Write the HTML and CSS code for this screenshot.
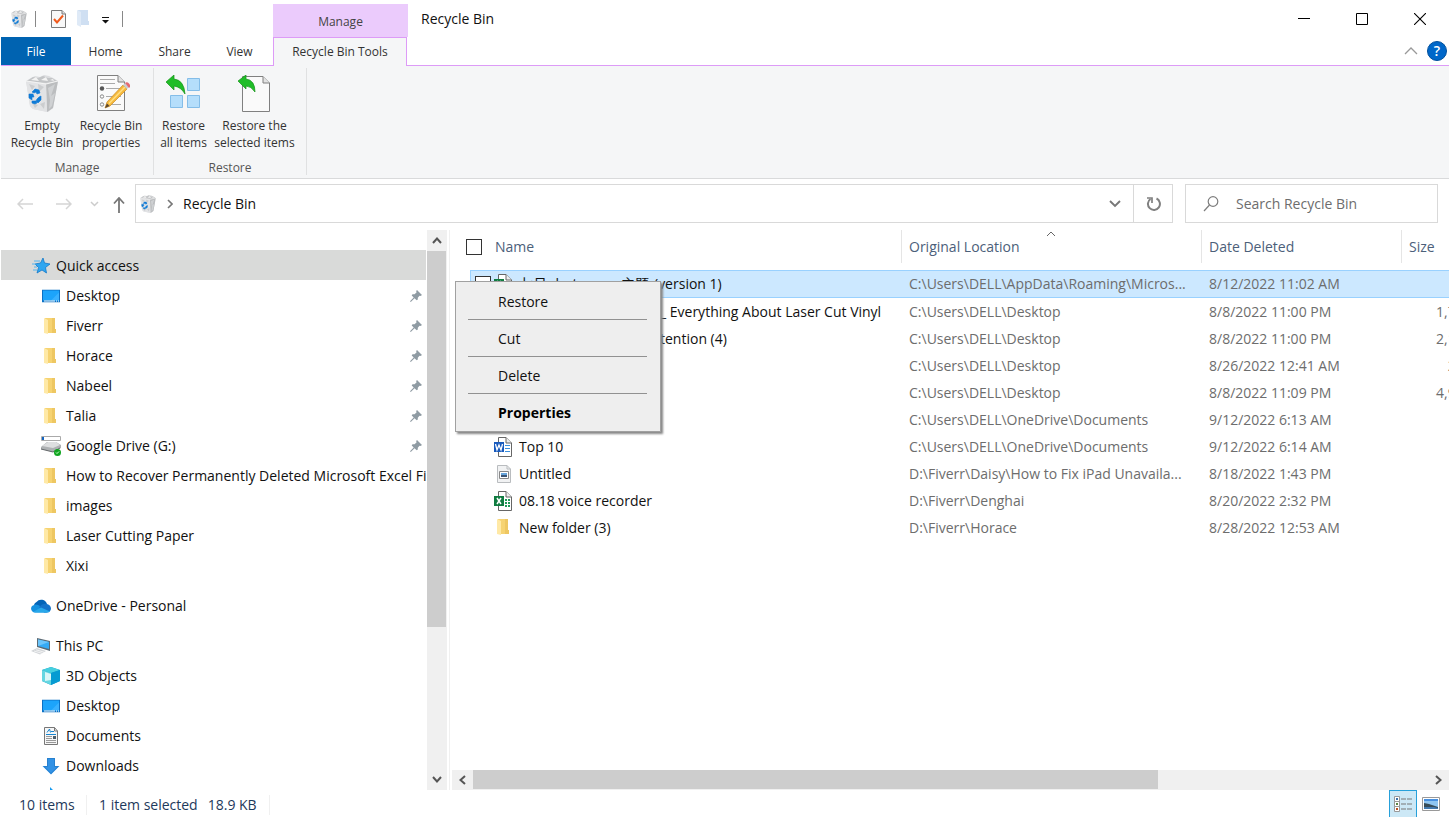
FILE: index.html
```html
<!DOCTYPE html>
<html lang="en">
<head>
<meta charset="utf-8">
<title>Recycle Bin</title>
<link rel="stylesheet" href="styles.css">
</head>
<body>
<svg class="defs" aria-hidden="true">
  <symbol id="bin" viewBox="0 0 32 37">
    <path d="M0 6 5 3 9 1 14 2 18 0 23 1 27 3 32 6 27 33 22 37 7 34 4 31Z" fill="#dcdddf"/>
    <path d="M20 9 32 6 27 33 21 37Z" fill="#bbbdbf"/>
    <path d="M22 13 29 9 25 21 29 18 26 31 23 34 24 25Z" fill="#cfd1d3"/>
    <path d="M0 6 20 9 21 37 7 34 4 31Z" fill="#e2e3e5"/>
    <path d="M3 9 9 11 6 15ZM12 9 18 12 13 17ZM6 28 12 30 9 33ZM14 29 19 27 18 34Z" fill="#cbcdcf"/>
    <path d="M1 6 7 2 12 3 17 1 22 3 26 3 31 6 20 8Z" fill="#c3c5c7"/>
    <path d="M5 5 10 2 13 6ZM15 5 20 2 22 6ZM24 5 27 4 28 6Z" fill="#f3f3f3"/>
    <path d="M0 6 20 9 32 6" fill="none" stroke="#f4f4f4" stroke-width="1"/>
    <path d="m6 17 3-3 4 1 1 3-3 1-1-2-2 1ZM3 19l4 0 1 3-2 0 0 3-3-2ZM6 26l4 0 1 2-2 1-3-1ZM11 24l2-2 2-1 0 4-3 3-2-2Z" fill="#0f7bd6" stroke="#0f7bd6" stroke-width=".6"/>
  </symbol>
  <symbol id="folder" viewBox="0 0 13 17">
    <path d="M1 0H11V11H12V15H2Z" fill="#f6d372"/>
    <path d="M8 0H11V11H12V15H8Z" fill="#eec762"/>
    <path d="M0 0 4 2V16L0 15Z" fill="#ffe9a6"/>
  </symbol>
  <symbol id="pin" viewBox="0 0 12 12">
    <path d="M7 0 12 5 10.500 6 9.500 5.700 7.800 7.700 7.800 9.500 6.700 10.300 4.500 8.300 0.800 12 0 11.300 3.700 7.500 1.700 5.400 2.500 4.300 4.500 4.200 6.500 2.500 6.200 1Z" fill="#8f9ba3"/>
  </symbol>
  <symbol id="desktop" viewBox="0 0 18 13">
    <path d="M0 0H18V13H0Z" fill="#0b70c4"/><path d="M1 1H17V11H1Z" fill="#1ca4fb"/><path d="M9 11 17 3V11Z" fill="#39b1ff"/>
    <path d="M2 11.500h11M14 11.500h1M16 11.500h1" stroke="#fff" stroke-width="1"/>
  </symbol>
  <symbol id="excel" viewBox="0 0 18 20">
    <path d="M4.500.5H12L17.500 6V19.500H4.500Z" fill="#fff" stroke="#666"/><path d="M12 .5V6H17.500" fill="#eee" stroke="#666"/>
    <path d="M11 8h2v2h-2zM14 8h2v2h-2zM11 11h2v2h-2zM14 11h2v2h-2zM11 14h2v2h-2zM14 14h2v2h-2z" fill="#1d9a57"/>
    <path d="M0 5H10V15H0Z" fill="#107c41"/><path d="M3 7 7 13M7 7 3 13" stroke="#fff" stroke-width="1.500"/>
  </symbol>
  <symbol id="word" viewBox="0 0 18 20">
    <path d="M4.500.5H12L17.500 6V19.500H4.500Z" fill="#fff" stroke="#666"/><path d="M12 .5V6H17.500" fill="#eee" stroke="#666"/>
    <path d="M11 8.500h5M11 11.500h5M11 14.500h5" stroke="#3b8fdc" stroke-width="1"/>
    <path d="M0 5H10V15H0Z" fill="#185abd"/><path d="M1.500 7 3 13 5 8 7 13 8.500 7" fill="none" stroke="#fff" stroke-width="1.300"/>
  </symbol>
</svg>

<div class="window">
  <header class="title-row">
    <div class="quick-bar">
      <svg class="ic-bin-s" viewBox="0 0 32 37"><use href="#bin"/></svg>
      <span class="bar"></span>
      <button type="button" class="plain qa-prop" aria-label="Properties"><svg width="15" height="18" viewBox="0 0 15 18"><path d="M.5.500H11L14.500 4V17.500H.5Z" fill="#f8f8f8" stroke="#7b7b7b"/><path d="M11 .5V4H14.500" fill="#ddd" stroke="#7b7b7b"/><path d="M3 9 6 12.500 12 5.500" fill="none" stroke="#f05a1c" stroke-width="2"/></svg></button>
      <button type="button" class="plain qa-new" aria-label="New folder"><svg width="13" height="17" viewBox="0 0 13 17"><path d="M1 0H11V11H12V15H2Z" fill="#cfdff2"/><path d="M0 0 4 2V17L0 15Z" fill="#dfeaf7"/></svg></button>
      <button type="button" class="plain qa-more" aria-label="Customize Quick Access Toolbar"><svg width="7" height="7" viewBox="0 0 7 7"><path d="M0 0H7V1H0ZM0 3H7L3.500 6.500Z" fill="#111"/></svg></button>
      <span class="bar"></span>
    </div>
    <div class="context-tab">Manage</div>
    <h1 class="title">Recycle Bin</h1>
    <div class="caption">
      <button type="button" class="plain" aria-label="Minimize"><svg width="12" height="12"><path d="M0 5.500H12" stroke="#000"/></svg></button>
      <button type="button" class="plain" aria-label="Maximize"><svg width="12" height="12"><path d="M.5.500H11.500V11.500H.5Z" fill="none" stroke="#000"/></svg></button>
      <button type="button" class="plain" aria-label="Close"><svg width="12" height="12"><path d="M0 0 12 12M12 0 0 12" stroke="#000" stroke-width="1.100"/></svg></button>
    </div>
  </header>

  <nav class="tabs">
    <button type="button" class="tab file">File</button>
    <button type="button" class="tab home">Home</button>
    <button type="button" class="tab share">Share</button>
    <button type="button" class="tab view">View</button>
    <button type="button" class="tab active">Recycle Bin Tools</button>
    <div class="tab-end">
      <button type="button" class="plain" aria-label="Minimize the ribbon"><svg width="14" height="8"><path d="M1 7 7 1 13 7" fill="none" stroke="#999" stroke-width="1.300"/></svg></button>
      <button type="button" class="help" aria-label="Help">?</button>
    </div>
  </nav>

  <section class="ribbon">
    <div class="group manage">
      <div class="tools">
        <button type="button" class="tool"><svg width="32" height="37"><use href="#bin"/></svg><span>Empty<br>Recycle Bin</span></button>
        <button type="button" class="tool"><svg width="38" height="37" viewBox="-5 0 38 37">
          <path d="M.5.500H21L27.500 7V35.500H.5Z" fill="#fafafa" stroke="#808080"/><path d="M21 .5V7H27.500" fill="#e2e2e2" stroke="#808080"/>
          <path d="M3 4.500H18M3 8.500H18M9 13.500H24M9 21.500H24M9 29.500H24" stroke="#aaa"/><circle cx="5" cy="13.500" r="2.200" fill="#555"/><circle cx="5" cy="21.500" r="1.700" fill="#fff" stroke="#888"/><circle cx="5" cy="29.500" r="1.700" fill="#fff" stroke="#888"/>
          <path d="M10 27 26 10 30 14 13 31 8 33Z" fill="#f6b93c" stroke="#c98a22" stroke-width=".7"/><path d="M12 28.500 28 12" stroke="#ffdf83" stroke-width="1.500"/><path d="M26 10 28 8 32 12 30 14Z" fill="#c9cdd0"/><path d="M28 8q2-1.500 4 .5t1 3.500l-1 1Z" fill="#e46a72"/><path d="M8 33 10 28.500 12.500 31Z" fill="#5a4632"/>
        </svg><span>Recycle Bin<br>properties</span></button>
      </div>
      <div class="group-name">Manage</div>
    </div>
    <div class="group restore">
      <div class="tools">
        <button type="button" class="tool"><svg width="36" height="37" viewBox="1 1 36 37">
          <g fill="#b5defb" stroke="#84bde8"><path d="M22.500 4.500h12v12h-12zM5.500 21.500h12v12h-12zM22.500 21.500h12v12h-12z"/></g>
          <path d="M1 8 9 1V5Q19 6 20 20 16 13 9 12V16Z" fill="#20bd28" stroke="#159119" stroke-width=".7"/></svg><span>Restore<br>all items</span></button>
        <button type="button" class="tool"><svg width="36" height="37" viewBox="1 1 36 37">
          <path d="M6.500 2.500H27L33.500 9V37.500H6.500Z" fill="#fafafa" stroke="#808080"/><path d="M27 2.500V9H33.500" fill="#e2e2e2" stroke="#808080"/>
          <path d="M2 7 10 1V5Q19 6 19 18 15 12 10 12V15Z" fill="#20bd28" stroke="#159119" stroke-width=".7"/></svg><span>Restore the<br>selected items</span></button>
      </div>
      <div class="group-name">Restore</div>
    </div>
  </section>

  <div class="address-row">
    <div class="nav">
      <button type="button" class="plain" aria-label="Back"><svg width="16" height="12"><path d="M16 6H1M6 1 1 6 6 11" fill="none" stroke="#d5d5d5" stroke-width="1.500"/></svg></button>
      <button type="button" class="plain forward" aria-label="Forward"><svg width="16" height="12"><path d="M0 6H15M10 1 15 6 10 11" fill="none" stroke="#d5d5d5" stroke-width="1.500"/></svg></button>
      <button type="button" class="plain recent" aria-label="Recent locations"><svg width="9" height="6"><path d="M1 1 4.500 4.500 8 1" fill="none" stroke="#ccc" stroke-width="1.500"/></svg></button>
      <button type="button" class="plain up" aria-label="Up"><svg width="12" height="16"><path d="M6 16V1M1 6.500 6 1 11 6.500" fill="none" stroke="#777" stroke-width="1.800"/></svg></button>
    </div>
    <div class="address">
      <svg class="ic-bin-s" viewBox="0 0 32 37"><use href="#bin"/></svg>
      <svg class="crumb" width="6" height="10"><path d="M1 1 5 5 1 9" fill="none" stroke="#777" stroke-width="1.600"/></svg>
      <span class="path">Recycle Bin</span>
      <button type="button" class="plain" aria-label="Previous locations"><svg width="12" height="8"><path d="M1 1 6 6 11 1" fill="none" stroke="#777" stroke-width="1.900"/></svg></button>
      <button type="button" class="plain refresh" aria-label="Refresh"><svg width="16" height="16" viewBox="0 0 16 16"><path d="M11.500 2.500A6 6 0 1 1 5.500 3" fill="none" stroke="#808080" stroke-width="2"/><path d="M2 2H7V7" fill="none" stroke="#808080" stroke-width="1.700"/></svg></button>
    </div>
    <label class="search">
      <svg width="16" height="16"><circle cx="10" cy="5.500" r="4.800" fill="none" stroke="#7d7d7d" stroke-width="1.200"/><path d="M6.500 9 1 15" stroke="#7d7d7d" stroke-width="1.200"/></svg>
      <input type="text" placeholder="Search Recycle Bin" aria-label="Search Recycle Bin">
    </label>
  </div>

  <main class="main">
    <aside class="side">
      <ul class="tree">
        <li class="root current"><svg class="ico" viewBox="0 0 18 18"><path d="M11 1 12.500 6 18 7 13.500 10.500 14.500 16 10 13 5 16 6.500 10.500 3 7 8.500 6Z" fill="#2fa6f0" stroke="#1479c9" stroke-width=".8"/><path d="M2 4h6M0 7h4M2 10h3M1 13h4" stroke="#54b4ee"/></svg>Quick access</li>
        <li><svg class="ico" viewBox="0 0 18 13"><use href="#desktop"/></svg><span>Desktop</span><svg class="pin"><use href="#pin"/></svg></li>
        <li><svg class="ico fold"><use href="#folder"/></svg><span>Fiverr</span><svg class="pin"><use href="#pin"/></svg></li>
        <li><svg class="ico fold"><use href="#folder"/></svg><span>Horace</span><svg class="pin"><use href="#pin"/></svg></li>
        <li><svg class="ico fold"><use href="#folder"/></svg><span>Nabeel</span><svg class="pin"><use href="#pin"/></svg></li>
        <li><svg class="ico fold"><use href="#folder"/></svg><span>Talia</span><svg class="pin"><use href="#pin"/></svg></li>
        <li><svg class="ico drive" viewBox="0 0 20 20"><path d="M.5.500H19.500V4.500H.5Z" fill="#fff" stroke="#aaa"/><path d="M1 1H3V4H1Z" fill="#1565c0"/><path d="M0 11 6 6H15L20 9V12L12 16 0 13Z" fill="#aeb1b3"/><path d="M1 10 7 6H15L19 9 12 12Z" fill="#dedfe0"/><path d="M0 13 12 16 19 12" fill="none" stroke="#626668"/><circle cx="16.500" cy="16.500" r="3.500" fill="#10a51f"/><path d="m15 16.500 1 1 2-2" fill="none" stroke="#d5ffd5"/></svg><span>Google Drive (G:)</span><svg class="pin"><use href="#pin"/></svg></li>
        <li><svg class="ico fold"><use href="#folder"/></svg><span class="long">How to Recover Permanently Deleted Microsoft Excel Files</span></li>
        <li><svg class="ico fold"><use href="#folder"/></svg><span>images</span></li>
        <li><svg class="ico fold"><use href="#folder"/></svg><span>Laser Cutting Paper</span></li>
        <li><svg class="ico fold"><use href="#folder"/></svg><span>Xixi</span></li>
        <li class="root gap"><svg class="ico drive" viewBox="0 0 20 14"><path d="M3 6A4 4 0 0 1 5.500 3 6 6 0 0 1 16 5L12 9Z" fill="#0364b8"/><path d="M4 13.500A4 4 0 0 1 1 7Q5 4 9 7L16 13.500Z" fill="#1490df"/><path d="M8 8Q12 3.500 16 5 20 6 20 10 19 13.500 16 13.500H13Z" fill="#1373ca"/><path d="M2 13 10 8.500 19 12.500Q18 13.500 16 13.500H4Z" fill="#28a8ea"/></svg>OneDrive - Personal</li>
        <li class="root gap"><svg class="ico drive" viewBox="0 0 20 18"><path d="M6 1 19 4V14L6 10Z" fill="#5d6b75"/><path d="M7 2.500 18 5V12L7 9Z" fill="#35aaf5"/><path d="M7 2.500 18 5 7 9Z" fill="#6cc5fb"/><path d="M0 14 6 11 15 14 9 17.500Z" fill="#d2d5d8"/><path d="m3 14 8 2.300M5 12.800l8 2.400" stroke="#fff" stroke-width=".7"/></svg>This PC</li>
        <li><svg class="ico" viewBox="0 0 18 18"><path d="M9 0 18 3V14L9 18 0 14V3Z" fill="#1397c0"/><path d="M0 3 9 0 18 3 9 6Z" fill="#46cfdf"/><path d="M0 3 9 6V18L0 14Z" fill="#65d6e1"/><path d="M3 5 9 7V13L3 14Z" fill="#d9f6f7"/><path d="M9 6 18 3V14L9 18Z" fill="#069bd2"/></svg><span>3D Objects</span></li>
        <li><svg class="ico" viewBox="0 0 18 13"><use href="#desktop"/></svg><span>Desktop</span></li>
        <li><svg class="ico" viewBox="0 0 18 18"><path d="M2.500.5H12.500L15.500 4V17.500H2.500Z" fill="#f6f6f6" stroke="#777"/><path d="M12.500.5V4H15.500" fill="none" stroke="#777"/><path d="M4 7.500H14M5 5.500 7.500 2M7.500 2 8.500 5.500M9 4.500H12" stroke="#1684cf"/><path d="M4 9.500H10M4 11.500H10M4 13.500H14M4 15.500H14" stroke="#999"/><path d="M11 9h3v3h-3z" fill="#4d5e6b"/></svg><span>Documents</span></li>
        <li><svg class="ico" viewBox="0 0 18 18"><path d="M5 1H13V9H17.500L9 17.500.5 9H5Z" fill="#3292e5"/><path d="M5.500 1.500H12.500V9.500H16L9 16.500 2 9.500H5.500Z" fill="none" stroke="#247bc8" stroke-width=".8"/></svg><span>Downloads</span></li>
        <li aria-label="Music"><svg class="ico" viewBox="0 0 18 18"><path d="M8 0 11 3 14 4V12A3 3 0 1 1 11 10V6L10 5V14H8Z" fill="#169bf0"/></svg></li>
      </ul>
    </aside>
    <div class="vbar">
      <button type="button" class="plain" aria-label="Scroll up"><svg width="10" height="7"><path d="M1 6 5 1.500 9 6" fill="none" stroke="#555" stroke-width="2"/></svg></button>
      <div class="vtrack"><div class="vthumb"></div></div>
      <button type="button" class="plain" aria-label="Scroll down"><svg width="10" height="7"><path d="M1 1 5 5.500 9 1" fill="none" stroke="#555" stroke-width="2"/></svg></button>
    </div>

    <section class="content">
      <div class="list">
        <table>
          <colgroup><col class="c-gutter"><col class="c-name"><col class="c-loc"><col class="c-date"><col class="c-size"></colgroup>
          <thead>
            <tr>
              <th colspan="2" class="h-name"><div class="cell"><input type="checkbox" aria-label="Select all"><span>Name</span></div></th>
              <th class="h-loc">Original Location<svg class="sort" width="10" height="6"><path d="M1 5 5 1 9 5" fill="none" stroke="#666"/></svg></th>
              <th>Date Deleted</th>
              <th>Size</th>
            </tr>
          </thead>
          <tbody>
            <tr class="space"><td colspan="5"></td></tr>
            <tr class="selected"><td></td><td><div class="cell"><input type="checkbox" checked aria-label="Select item"><svg class="doc"><use href="#excel"/></svg><span class="stem"><span>七月photos</span><span>主题</span></span><span>(version 1)</span></div></td><td>C:\Users\DELL\AppData\Roaming\Micros...</td><td>8/12/2022 11:02 AM</td><td></td></tr>
            <tr><td></td><td><div class="cell"><svg class="doc"><use href="#word"/></svg><span class="stem end">Vinyl</span><span>_ Everything About Laser Cut Vinyl</span></div></td><td>C:\Users\DELL\Desktop</td><td>8/8/2022 11:00 PM</td><td>1,726 KB</td></tr>
            <tr><td></td><td><div class="cell"><svg class="doc"><use href="#word"/></svg><span class="stem end">At</span><span>tention (4)</span></div></td><td>C:\Users\DELL\Desktop</td><td>8/8/2022 11:00 PM</td><td>2,114 KB</td></tr>
            <tr><td></td><td></td><td>C:\Users\DELL\Desktop</td><td>8/26/2022 12:41 AM</td><td>214 KB</td></tr>
            <tr><td></td><td></td><td>C:\Users\DELL\Desktop</td><td>8/8/2022 11:09 PM</td><td>4,926 KB</td></tr>
            <tr><td></td><td></td><td>C:\Users\DELL\OneDrive\Documents</td><td>9/12/2022 6:13 AM</td><td></td></tr>
            <tr><td></td><td><div class="cell"><svg class="doc"><use href="#word"/></svg><span>Top 10</span></div></td><td>C:\Users\DELL\OneDrive\Documents</td><td>9/12/2022 6:14 AM</td><td></td></tr>
            <tr><td></td><td><div class="cell"><svg class="doc" viewBox="0 0 18 20"><path d="M3.500 1.500H13L16.500 5V18.500H3.500Z" fill="#f1f2f3" stroke="#b9bcbf"/><path d="M13 1.500V5H16.500" fill="none" stroke="#b9bcbf"/><path d="M5.500 7.500H14.500V14.500H5.500Z" fill="#fff" stroke="#888"/><path d="M7 9H13V13H7Z" fill="#67a5dc"/><path d="M7 11H13V13H7Z" fill="#3b5575"/></svg><span>Untitled</span></div></td><td>D:\Fiverr\Daisy\How to Fix iPad Unavaila...</td><td>8/18/2022 1:43 PM</td><td></td></tr>
            <tr><td></td><td><div class="cell"><svg class="doc"><use href="#excel"/></svg><span>08.18 voice recorder</span></div></td><td>D:\Fiverr\Denghai</td><td>8/20/2022 2:32 PM</td><td></td></tr>
            <tr><td></td><td><div class="cell"><svg class="doc fold-doc"><use href="#folder"/></svg><span>New folder (3)</span></div></td><td>D:\Fiverr\Horace</td><td>8/28/2022 12:53 AM</td><td></td></tr>
          </tbody>
        </table>
      </div>
      <div class="hbar">
        <button type="button" class="plain" aria-label="Scroll left"><svg width="7" height="10"><path d="M6 1 1.500 5 6 9" fill="none" stroke="#555" stroke-width="2"/></svg></button>
        <div class="htrack"><div class="hthumb"></div></div>
        <button type="button" class="plain" aria-label="Scroll right"><svg width="7" height="10"><path d="M1 1 5.500 5 1 9" fill="none" stroke="#555" stroke-width="2"/></svg></button>
      </div>
    </section>

    <div class="menu" role="menu">
      <button type="button" role="menuitem">Restore</button>
      <hr>
      <button type="button" role="menuitem">Cut</button>
      <hr>
      <button type="button" role="menuitem">Delete</button>
      <hr>
      <button type="button" role="menuitem" class="default">Properties</button>
    </div>
  </main>

  <footer class="status">
    <span class="count">10 items</span>
    <span class="picked">1 item selected</span>
    <span class="size">18.9 KB</span>
    <div class="views">
      <button type="button" class="on" aria-label="Details view"><svg width="18" height="16"><path d="M.5.500h5v5h-5zM.5 5.500h5v5h-5zM.5 10.500h5v5h-5z" fill="#fff" stroke="#999"/><path d="M7 3h5M13 3h5M7 8h5M13 8h5M7 13h5M13 13h5" stroke="#777"/><path d="M2 2h2v2h-2z" fill="#3d70a8"/><path d="M2 7h2v2h-2z" fill="#5d8445"/><path d="M2 12h2v2h-2z" fill="#bd4f22"/></svg></button>
      <button type="button" aria-label="Large icons view"><svg width="18" height="14"><path d="M.5.500H17.500V13.500H.5Z" fill="#fff" stroke="#999"/><path d="M2 2H16V12H2Z" fill="#8fc6f1"/><path d="M2 2H16V4H2Z" fill="#4890df"/><path d="M2 6 7 7 16 10V12H2Z" fill="#374c58"/><path d="M2 10H12L16 11V12H2Z" fill="#4279ae"/></svg></button>
    </div>
  </footer>
</div>
</body>
</html>
```
FILE: styles.css
```css
* { box-sizing: border-box; }
body { margin: 0; background: #fff; color: #111; font: 14px/20px "Open Sans", "Noto Sans CJK SC", sans-serif; }
svg { display: block; flex: none; }
button, input { font: inherit; color: inherit; margin: 0; }
.defs { position: absolute; width: 0; height: 0; }
.plain { border: 0; background: none; padding: 0; display: flex; align-items: center; justify-content: center; }
.window { display: flex; flex-direction: column; height: 100vh; padding-left: 1px; overflow: hidden; }

.title-row { display: flex; height: 37px; flex: none; }
.quick-bar { width: 272px; display: flex; align-items: center; padding-left: 10px; }
.ic-bin-s { width: 16px; height: 18px; }
.bar { width: 1px; height: 16px; background: #888; margin-left: 8px; }
.qa-prop { margin-left: 15px; }
.qa-new { margin-left: 11px; }
.qa-more { margin-left: 12px; padding-top: 3px; }
.qa-more + .bar { margin-left: 13px; }
.context-tab { width: 135px; margin-top: 4px; background: #ebcbfc; color: #444; font-size: 12px; line-height: 35px; text-align: center; }
.title { margin: 0; padding-left: 13px; font-size: 14px; font-weight: 400; line-height: 37px; flex: 1; }
.caption { display: flex; }
.caption button { width: 58px; }

.tabs { display: flex; height: 29px; flex: none; border-bottom: 1px solid #dd9bf7; font-size: 12px; color: #333; }
.tab { border: 0; background: none; padding: 2px 0 0; }
.file { width: 70px; background: #0063b1; color: #fff; }
.home { width: 69px; }
.share { width: 69px; }
.view { width: 61px; margin-right: 3px; }
.active { width: 134px; height: 29px; padding: 0; background: #f5f6f7; border: 1px solid #dd9bf7; border-bottom: 0; }
.tab-end { margin-left: auto; display: flex; align-items: center; gap: 9px; padding-right: 2px; }
.help { width: 20px; height: 20px; border: 1px solid #004f9c; border-radius: 50%; background: #0067c9; color: #fff; padding: 0; font-size: 14px; font-weight: 600; line-height: 18px; }

.ribbon { display: flex; height: 113px; flex: none; background: #f5f6f7; border-bottom: 1px solid #d9dadb; padding: 2px 0 3px; font-size: 12px; line-height: 17px; color: #333; }
.group { border-right: 1px solid #e0e1e2; }
.manage { width: 153px; }
.restore { width: 153px; }
.tools { display: flex; padding: 7px 0 0 7px; }
.restore .tools { padding-left: 3px; }
.tool { border: 0; background: none; padding: 0; width: 68px; display: flex; flex-direction: column; align-items: center; gap: 5px; white-space: nowrap; }
.manage .tool + .tool { width: 70px; }
.restore .tool { width: 53px; }
.restore .tool + .tool { width: 89px; }
.group-name { text-align: center; color: #555; margin-top: 8px; }

.address-row { display: flex; height: 51px; flex: none; padding: 5px 11px 7px 0; }
.nav { width: 134px; display: flex; align-items: center; padding-left: 16px; }
.forward { margin-left: 23px; }
.recent { margin-left: 18px; }
.up { margin-left: 14px; padding-top: 2px; }
.address { flex: 1; display: flex; align-items: center; border: 1px solid #d9d9d9; padding-left: 4px; }
.crumb { margin-left: 11px; }
.path { flex: 1; padding-left: 10px; }
.address button { width: 36px; align-self: stretch; }
.address .refresh { width: 39px; border-left: 1px solid #d9d9d9; }
.search { width: 253px; margin-left: 12px; border: 1px solid #d9d9d9; display: flex; align-items: center; padding-left: 17px; }
.search input { flex: 1; min-width: 0; border: 0; outline: 0; padding: 0 0 0 17px; background: none; color: #666; }
.search input::placeholder { color: #6d6d6d; opacity: 1; }

.main { position: relative; flex: 1; min-height: 0; display: flex; }
.side { width: 426px; overflow: hidden; }
.tree { list-style: none; margin: 0; padding: 20px 0 0; }
.tree li { height: 30px; display: flex; align-items: center; padding: 2px 0 0 41px; white-space: nowrap; margin-right: 1px; }
.tree .root { padding-left: 31px; }
.tree .gap { margin-top: 10px; }
.tree .current { background: #d9dad9; }
.ico { width: 18px; height: 18px; margin-right: 6px; }
.fold { width: 13px; height: 17px; margin: 0 9px 0 2px; }
.drive { width: 20px; height: 20px; margin: 0 5px 0 -1px; }
.pin { width: 12px; height: 12px; margin: 0 4px 0 auto; }
.long { overflow: hidden; }

.vbar { width: 20px; background: #f0f0f0; display: flex; flex-direction: column; }
.vbar button { height: 21px; }
.vtrack { flex: 1; }
.vthumb { height: 72.5%; background: #cdcdcd; width: 19px; }
.content { flex: 1; min-width: 0; display: flex; flex-direction: column; border-left: 1px solid #f0f0f0; margin-left: 2px; }
.list { flex: 1; min-height: 0; overflow: hidden; }
table { border-collapse: separate; border-spacing: 0; table-layout: fixed; width: 1050px; }
.c-gutter { width: 20px; } .c-name { width: 432px; } .c-loc { width: 300px; } .c-date { width: 200px; } .c-size { width: 98px; }
th { height: 33px; padding: 0 0 0 7px; font-weight: 400; text-align: left; color: #4c607a; border-right: 1px solid #e5e5e5; }
.h-name { padding-left: 16px; }
.h-name span { margin-left: 13px; }
.h-loc { position: relative; }
.sort { position: absolute; top: 1px; left: 144px; }
.cell { display: flex; align-items: center; white-space: nowrap; }
td { height: 27px; padding: 0 0 0 7px; color: #6d6d6d; white-space: nowrap; }
td:nth-child(2) { padding-left: 24px; color: #111; }
td:last-child { text-align: right; padding-right: 7px; }
.space td { height: 7px; }
.selected td { height: 28px; background: #cce8ff; border: solid #99d1ff; border-width: 1px 0; }
.selected td:first-child { background: none; border: 0; }
.selected td:nth-child(2) { border-left-width: 1px; padding-left: 4px; }
.doc { width: 18px; height: 20px; margin-right: 7px; }
.fold-doc { width: 13px; height: 17px; margin: 0 9px 0 3px; }
.stem { width: 130px; display: flex; justify-content: space-between; margin-right: 5px; flex: none; }
.stem.end { width: 141px; justify-content: flex-end; margin-right: 0; }
input[type="checkbox"] { appearance: none; width: 16px; height: 16px; border: 1px solid #333; background: #fff; flex: none; }
.selected input { margin-right: 3px; }

.hbar { height: 20px; flex: none; background: #f0f0f0; display: flex; margin-left: 2px; }
.hbar button { width: 21px; }
.htrack { flex: 1; }
.hthumb { width: 71.7%; height: 19px; background: #cdcdcd; }

.menu { position: absolute; left: 454px; top: 51px; width: 206px; padding: 1px; background: #eee; border: 1px solid #a0a0a0; box-shadow: 2px 2px 2px #888; }
.menu button { display: block; width: 100%; height: 36px; padding: 2px 0 0 41px; border: 0; background: none; text-align: left; }
.menu hr { height: 1px; margin: 0 12px 0 11px; border: 0; background: #919191; }
.menu .default { font-weight: 700; color: #000; }

.status { height: 27px; flex: none; display: flex; align-items: center; padding: 2px 4px 0 18px; color: #1e395b; }
.count { width: 68px; border-right: 1px solid #f0f0f0; }
.picked { padding-left: 12px; }
.size { padding: 0 12px 0 10px; border-right: 1px solid #f0f0f0; }
.views { margin: -2px 0 0 auto; display: flex; align-self: stretch; }
.views button { width: 28px; padding: 0; border: 0; background: none; display: flex; align-items: center; justify-content: center; }
.views .on { background: #cce8f6; border: 1px solid #26a0da; border-bottom: 0; }
```
